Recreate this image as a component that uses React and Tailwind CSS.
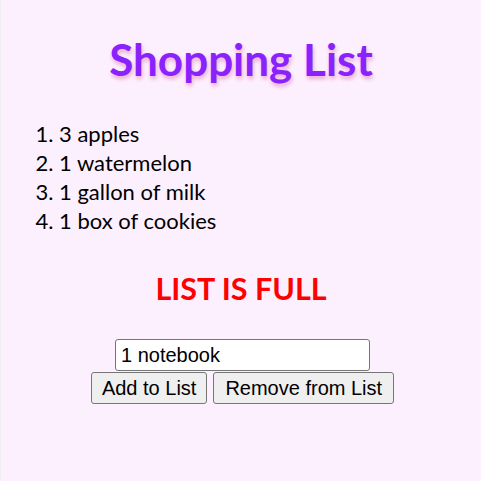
export default function App() {
  return (
    <div className="min-h-[481px] bg-[#fdf0fe] border-l border-[#eeeef2] font-['Lato',sans-serif] text-black">
      <h1 className="pt-[31px] text-center text-[44px] leading-[56px] font-bold text-[#8a22fd] [text-shadow:1px_3px_4px_#e8a8d0]">
        Shopping List
      </h1>
      <ol className="mt-[32px] list-decimal pl-[58px] text-[22px] leading-[29px]">
        <li>3 apples</li>
        <li>1 watermelon</li>
        <li>1 gallon of milk</li>
        <li>1 box of cookies</li>
      </ol>
      <h2 className="mt-[33px] text-center text-[30.5px] leading-[40px] font-bold text-[#ff0000]">
        LIST IS FULL
      </h2>
      <div className="mt-[31px] pl-[3px] flex flex-col items-center font-['Liberation_Sans',Arial,sans-serif]">
        <input
          type="text"
          defaultValue="1 notebook"
          className="w-[255px] h-[32px] px-[5px] text-[20px] bg-white border border-[#767676] rounded-[3px] outline-none"
        />
        <div className="mt-[1px] flex gap-[6px]">
          <button className="h-[32px] px-[10px] text-[20px] bg-[#efefef] border border-[#767676] rounded-[3px]">
            Add to List
          </button>
          <button className="h-[32px] px-[11px] text-[20px] bg-[#efefef] border border-[#767676] rounded-[3px]">
            Remove from List
          </button>
        </div>
      </div>
    </div>
  );
}
